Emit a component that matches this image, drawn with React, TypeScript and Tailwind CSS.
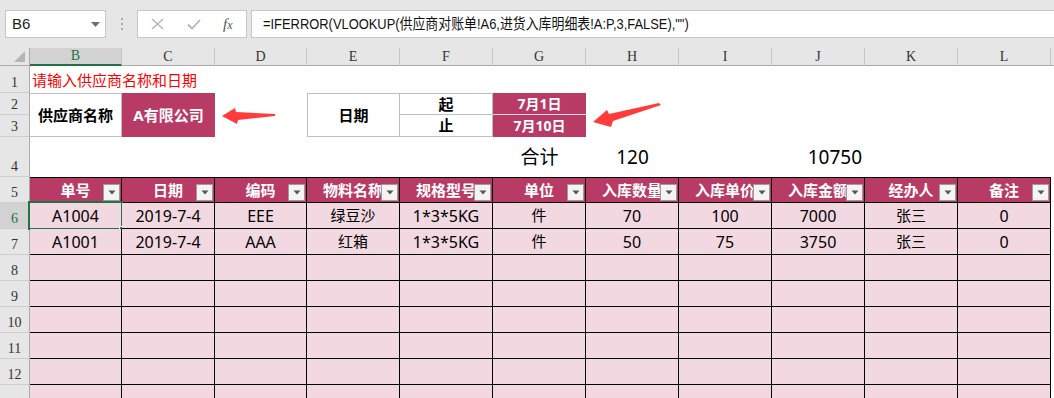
import React from 'react';

const W = ['w-[92px]', 'w-[93px]', 'w-[92px]', 'w-[93px]', 'w-[93px]', 'w-[93px]', 'w-[93px]', 'w-[93px]', 'w-[93px]', 'w-[93px]', 'w-[93px]'];
const LETTERS = ['B', 'C', 'D', 'E', 'F', 'G', 'H', 'I', 'J', 'K', 'L'];
const HEADERS = ['单号', '日期', '编码', '物料名称', '规格型号', '单位', '入库数量', '入库单价', '入库金额', '经办人', '备注'];
const DATA = [
  ['A1004', '2019-7-4', 'EEE', '绿豆沙', '1*3*5KG', '件', '70', '100', '7000', '张三', '0'],
  ['A1001', '2019-7-4', 'AAA', '红箱', '1*3*5KG', '件', '50', '75', '3750', '张三', '0'],
];

const SANS = "font-['Noto_Sans','Noto_Sans_CJK_SC',sans-serif]";
const SERIF = "font-['Liberation_Serif','DejaVu_Serif',serif]";

function RowHead({ n, selected }: { n?: number; selected?: boolean }) {
  return (
    <div
      className={
        'w-[30px] shrink-0 border-r border-r-[#ababab] border-b border-b-[#cdcdcd] flex items-end justify-center pb-[1px] text-[14px] leading-[16px] ' +
        SERIF +
        (selected ? ' bg-[#d2d2d2] text-[#217346]' : ' bg-[#e6e6e6] text-[#333]')
      }
    >
      {n}
    </div>
  );
}

function FilterBtn() {
  return (
    <div className="absolute right-[1px] bottom-[1px] w-[17px] h-[17px] bg-[#f4f4f4] border border-[#9c9c9c] flex items-center justify-center">
      <svg width="8" height="5" viewBox="0 0 8 5">
        <polygon points="0.5,0.5 7.5,0.5 4,4.5" fill="#555" />
      </svg>
    </div>
  );
}

export default function App() {
  return (
    <div className={'relative w-[1054px] h-[398px] overflow-hidden bg-white ' + SANS}>
      {/* Formula bar */}
      <div className="h-[48px] bg-[#e6e6e6] flex items-start pt-[10px] pl-[5px]">
        <div className="w-[101px] h-[28px] bg-white border border-[#c6c6c6] flex items-center justify-between pl-[6px] pr-[5px]">
          <span className="text-[15px] text-[#222] font-['Liberation_Sans',sans-serif]">B6</span>
          <svg width="9" height="5" viewBox="0 0 9 5">
            <polygon points="0,0 9,0 4.5,5" fill="#6f6f6f" />
          </svg>
        </div>
        <div className="w-[31px] h-[28px] flex flex-col items-center justify-center gap-[3px]">
          <div className="w-[2px] h-[2px] bg-[#a8a8a8]" />
          <div className="w-[2px] h-[2px] bg-[#a8a8a8]" />
          <div className="w-[2px] h-[2px] bg-[#a8a8a8]" />
        </div>
        <div className="w-[110px] h-[28px] bg-white border border-[#c6c6c6] flex items-center pl-[12px]">
          <svg width="13" height="12" viewBox="0 0 13 12" className="ml-[1px]">
            <path d="M1 1 L12 11 M12 1 L1 11" stroke="#b4b4b4" strokeWidth="1.4" fill="none" />
          </svg>
          <svg width="14" height="11" viewBox="0 0 14 11" className="ml-[23px]">
            <path d="M1 5.5 L5 9.5 L13 1" stroke="#b4b4b4" strokeWidth="1.8" fill="none" />
          </svg>
          <span className={'ml-[22px] italic text-[15px] text-[#555] leading-none ' + SERIF}>
            f<span className="text-[12px]">x</span>
          </span>
        </div>
        <div className="ml-[4px] flex-1 h-[28px] bg-white border border-[#c6c6c6] border-r-0 flex items-center pl-[11px] overflow-hidden">
          <span className="inline-block origin-left scale-x-[0.86] whitespace-nowrap text-[15px] text-[#111] font-['Liberation_Sans','Noto_Sans_CJK_SC',sans-serif]">
            {'=IFERROR(VLOOKUP(供应商对账单!A6,进货入库明细表!A:P,3,FALSE),"")'}
          </span>
        </div>
      </div>

      {/* Column headers */}
      <div className="flex h-[18px] bg-[#e6e6e6]">
        <div className="w-[30px] shrink-0 border-r border-r-[#ababab] border-b border-b-[#ababab] flex items-end justify-end pr-[4px] pb-[3px]">
          <svg width="11" height="11" viewBox="0 0 11 11">
            <polygon points="11,0 11,11 0,11" fill="#b6b6b6" />
          </svg>
        </div>
        {LETTERS.map((l, i) => (
          <div
            key={l}
            className={
              W[i] +
              ' shrink-0 border-r border-r-[#c8c8c8] flex items-center justify-center text-[14px] leading-none ' +
              SERIF +
              (i === 0
                ? ' bg-[#d2d2d2] text-[#217346] border-b-2 border-b-[#217346]'
                : ' text-[#333] border-b border-b-[#ababab]')
            }
          >
            {l}
          </div>
        ))}
        <div className="flex-1 border-b border-b-[#ababab]" />
      </div>

      {/* Rows 1-3 */}
      <div className="grid grid-cols-[30px_92px_93px_92px_93px_93px_93px_93px_93px_93px_93px_93px_1fr] grid-rows-[27px_22px_22px]">
        <div className="col-start-1 row-start-1 flex"><RowHead n={1} /></div>
        <div className="col-start-1 row-start-2 flex"><RowHead n={2} /></div>
        <div className="col-start-1 row-start-3 flex"><RowHead n={3} /></div>
        <div className="col-start-2 col-span-5 row-start-1 flex items-end pl-[2px] pb-[3px] text-[15px] leading-[20px] text-[#ff0000] whitespace-nowrap">
          请输入供应商名称和日期
        </div>
        <div className="col-start-2 row-start-2 row-span-2 border-t border-r border-b border-[#bfbfbf] flex items-center justify-center text-[15px] font-bold text-black">
          供应商名称
        </div>
        <div className="col-start-3 row-start-2 row-span-2 bg-[#b83b65] border-t border-b border-[#b83b65] flex items-center justify-center text-[15px] font-bold text-white">
          A有限公司
        </div>
        <div className="col-start-5 row-start-2 row-span-2 border border-[#bfbfbf] flex items-center justify-center text-[15px] font-bold text-black">
          日期
        </div>
        <div className="col-start-6 row-start-2 border-t border-r border-b border-[#bfbfbf] flex items-center justify-center text-[15px] font-bold text-black leading-none">
          起
        </div>
        <div className="col-start-6 row-start-3 border-r border-b border-[#bfbfbf] flex items-center justify-center text-[15px] font-bold text-black leading-none">
          止
        </div>
        <div className="col-start-7 row-start-2 bg-[#b83b65] border-b border-b-[#f0dbe2] flex items-center justify-center text-[14px] font-bold text-white leading-none">
          7月1日
        </div>
        <div className="col-start-7 row-start-3 bg-[#b83b65] flex items-center justify-center text-[14px] font-bold text-white leading-none">
          7月10日
        </div>
      </div>

      {/* Row 4 */}
      <div className="flex h-[40px]">
        <RowHead n={4} />
        {LETTERS.map((l, i) => (
          <div
            key={l}
            className={
              W[i] +
              ' shrink-0 flex items-end pb-[9px] text-[19px] leading-[22px] text-black ' +
              (l === 'J' ? 'justify-end pr-[3px]' : 'justify-center')
            }
          >
            {l === 'G' ? '合计' : l === 'H' ? '120' : l === 'J' ? '10750' : ''}
          </div>
        ))}
        <div className="flex-1" />
      </div>

      {/* Row 5 header */}
      <div className="flex h-[26px]">
        <RowHead n={5} />
        {HEADERS.map((h, i) => (
          <div
            key={h}
            className={
              W[i] +
              ' shrink-0 relative bg-[#b83b65] border-t border-b border-r border-black flex items-center justify-center text-[15px] font-bold text-white whitespace-nowrap leading-none'
            }
          >
            {h}
            <FilterBtn />
          </div>
        ))}
        <div className="flex-1" />
      </div>

      {/* Data rows */}
      {DATA.map((row, r) => (
        <div key={r} className="flex h-[26px]">
          <RowHead n={6 + r} selected={r === 0} />
          {row.map((v, i) => (
            <div
              key={i}
              className={
                W[i] +
                ' shrink-0 relative bg-[#f2d8e0] border-b border-r border-black flex items-center justify-center text-black whitespace-nowrap leading-none ' +
                (/[\u4e00-\u9fff]/.test(v) ? 'text-[15px]' : 'text-[16px]')
              }
            >
              {v}
              {r === 0 && i === 0 && (
                <div className="absolute -left-[2px] -top-[2px] w-[95px] h-[29px] border-2 border-[#217346]">
                  <div className="absolute -right-[4px] -bottom-[4px] w-[6px] h-[6px] bg-[#217346] border border-white" />
                </div>
              )}
            </div>
          ))}
          <div className="flex-1" />
        </div>
      ))}

      {/* Empty rows */}
      {[8, 9, 10, 11, 12, 0].map((n, k) => (
        <div key={k} className="flex h-[26px]">
          <RowHead n={n || undefined} />
          {W.map((w, i) => (
            <div key={i} className={w + ' shrink-0 bg-[#f2d8e0] border-b border-r border-black'} />
          ))}
          <div className="flex-1" />
        </div>
      ))}

      {/* Arrows */}
      <svg className="absolute left-[218px] top-[104px]" width="62" height="24" viewBox="0 0 62 24">
        <polygon points="4,12 17,4 18,8 57,10 57,12 20,16 19,20" fill="#ff3b3b" />
      </svg>
      <svg className="absolute left-[588px] top-[98px]" width="76" height="34" viewBox="0 0 76 34">
        <polygon points="5,24 19,12 21,16 71,5 73,7 25,23 23,29" fill="#ff3b3b" />
      </svg>
    </div>
  );
}
